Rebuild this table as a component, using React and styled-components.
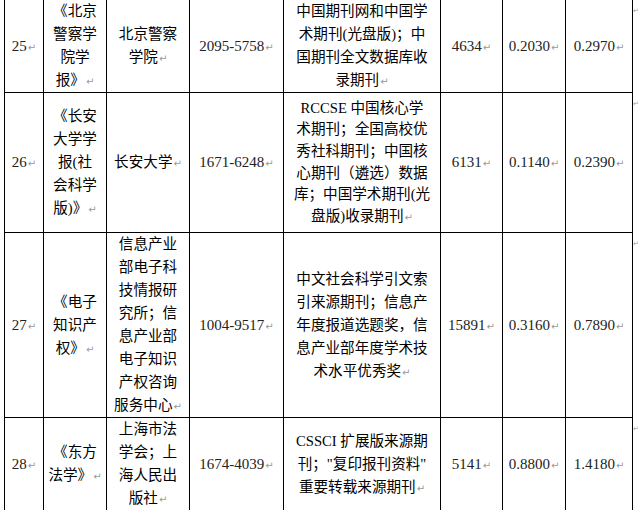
import React from 'react';
import styled, { createGlobalStyle } from 'styled-components';

const Global = createGlobalStyle`
  html, body { margin: 0; padding: 0; background: #fff; }
  body { overflow: hidden; }
`;

const Table = styled.table`
  border-collapse: collapse;
  table-layout: fixed;
  margin-left: 4px;
  width: 633px;
  font-family: "Liberation Serif", "Noto Sans CJK SC", serif;
  font-size: 14.6px;
  color: #000;
  tr:first-child td { border-top: none; }
`;

const Row = styled.tr`
  height: ${(p) => p.$h}px;
`;

const Cell = styled.td`
  border: 1px solid #000;
  padding: 0 2px;
  text-align: center;
  vertical-align: middle;
  white-space: nowrap;
  overflow: visible;
`;

const NumCell = styled(Cell)`
  font-size: 15px;
  color: #222;
  line-height: 23px;
`;

const EndCell = styled.td`
  border: none;
  padding: 0;
  vertical-align: top;
  text-align: left;
  line-height: 23px;
  height: 23px;
  overflow: visible;
`;

const Line = styled.div`
  height: ${(p) => (p.$tight ? '21.6px' : '23px')};
  line-height: ${(p) => (p.$tight ? '21.6px' : '23px')};
  overflow: visible;
`;

const Mark = styled.span`
  font-family: "DejaVu Sans", sans-serif;
  font-size: 10px;
  line-height: 0;
  color: #999;
  margin-left: 1px;
`;

const EndMark = styled(Mark)`
  margin-left: 0;
  font-size: 7px;
  display: block;
  line-height: 23px;
  color: #a0a0a0;
`;

const rows = [
  {
    no: '25', h: 92,
    name: ['《北京', '警察学', '院学', '报》'],
    org: ['北京警察', '学院'],
    issn: '2095-5758',
    src: ['中国期刊网和中国学', '术期刊(光盘版)；中', '国期刊全文数据库收', '录期刊'],
    cnt: '4634', a: '0.2030', b: '0.2970',
  },
  {
    no: '26', h: 140,
    name: ['《长安', '大学学', '报(社', '会科学', '版)》'],
    org: ['长安大学'],
    issn: '1671-6248',
    src: ['RCCSE 中国核心学', '术期刊；全国高校优', '秀社科期刊；中国核', '心期刊（遴选）数据', '库；中国学术期刊(光', '盘版)收录期刊'],
    tight: true,
    cnt: '6131', a: '0.1140', b: '0.2390',
  },
  {
    no: '27', h: 184,
    name: ['《电子', '知识产', '权》'],
    org: ['信息产业', '部电子科', '技情报研', '究所；信', '息产业部', '电子知识', '产权咨询', '服务中心'],
    issn: '1004-9517',
    src: ['中文社会科学引文索', '引来源期刊；信息产', '年度报道选题奖，信', '息产业部年度学术技', '术水平优秀奖'],
    cnt: '15891', a: '0.3160', b: '0.7890',
  },
  {
    no: '28', h: 92,
    name: ['《东方', '法学》'],
    org: ['上海市法', '学会；上', '海人民出', '版社'],
    issn: '1674-4039',
    src: ['CSSCI 扩展版来源期', '刊；"复印报刊资料"', '重要转载来源期刊'],
    cnt: '5141', a: '0.8800', b: '1.4180',
  },
];

const Lines = ({ lines, tight }) => (
  <>
    {lines.map((l, i) => (
      <Line key={i} $tight={tight}>
        {l}
        {i === lines.length - 1 && <Mark>↵</Mark>}
      </Line>
    ))}
  </>
);

export default function App() {
  return (
    <>
      <Global />
      <Table>
        <colgroup>
          <col style={{ width: 39 }} />
          <col style={{ width: 63 }} />
          <col style={{ width: 83 }} />
          <col style={{ width: 94 }} />
          <col style={{ width: 157 }} />
          <col style={{ width: 62 }} />
          <col style={{ width: 63 }} />
          <col style={{ width: 67 }} />
          <col style={{ width: 5 }} />
        </colgroup>
        <tbody>
          {rows.map((r) => (
            <Row key={r.no} $h={r.h}>
              <NumCell>{r.no}<Mark>↵</Mark></NumCell>
              <Cell><Lines lines={r.name} /></Cell>
              <Cell><Lines lines={r.org} /></Cell>
              <NumCell>{r.issn}<Mark>↵</Mark></NumCell>
              <Cell><Lines lines={r.src} tight={r.tight} /></Cell>
              <NumCell>{r.cnt}<Mark>↵</Mark></NumCell>
              <NumCell>{r.a}<Mark>↵</Mark></NumCell>
              <NumCell>{r.b}<Mark>↵</Mark></NumCell>
              <EndCell><EndMark>↵</EndMark></EndCell>
            </Row>
          ))}
        </tbody>
      </Table>
    </>
  );
}
